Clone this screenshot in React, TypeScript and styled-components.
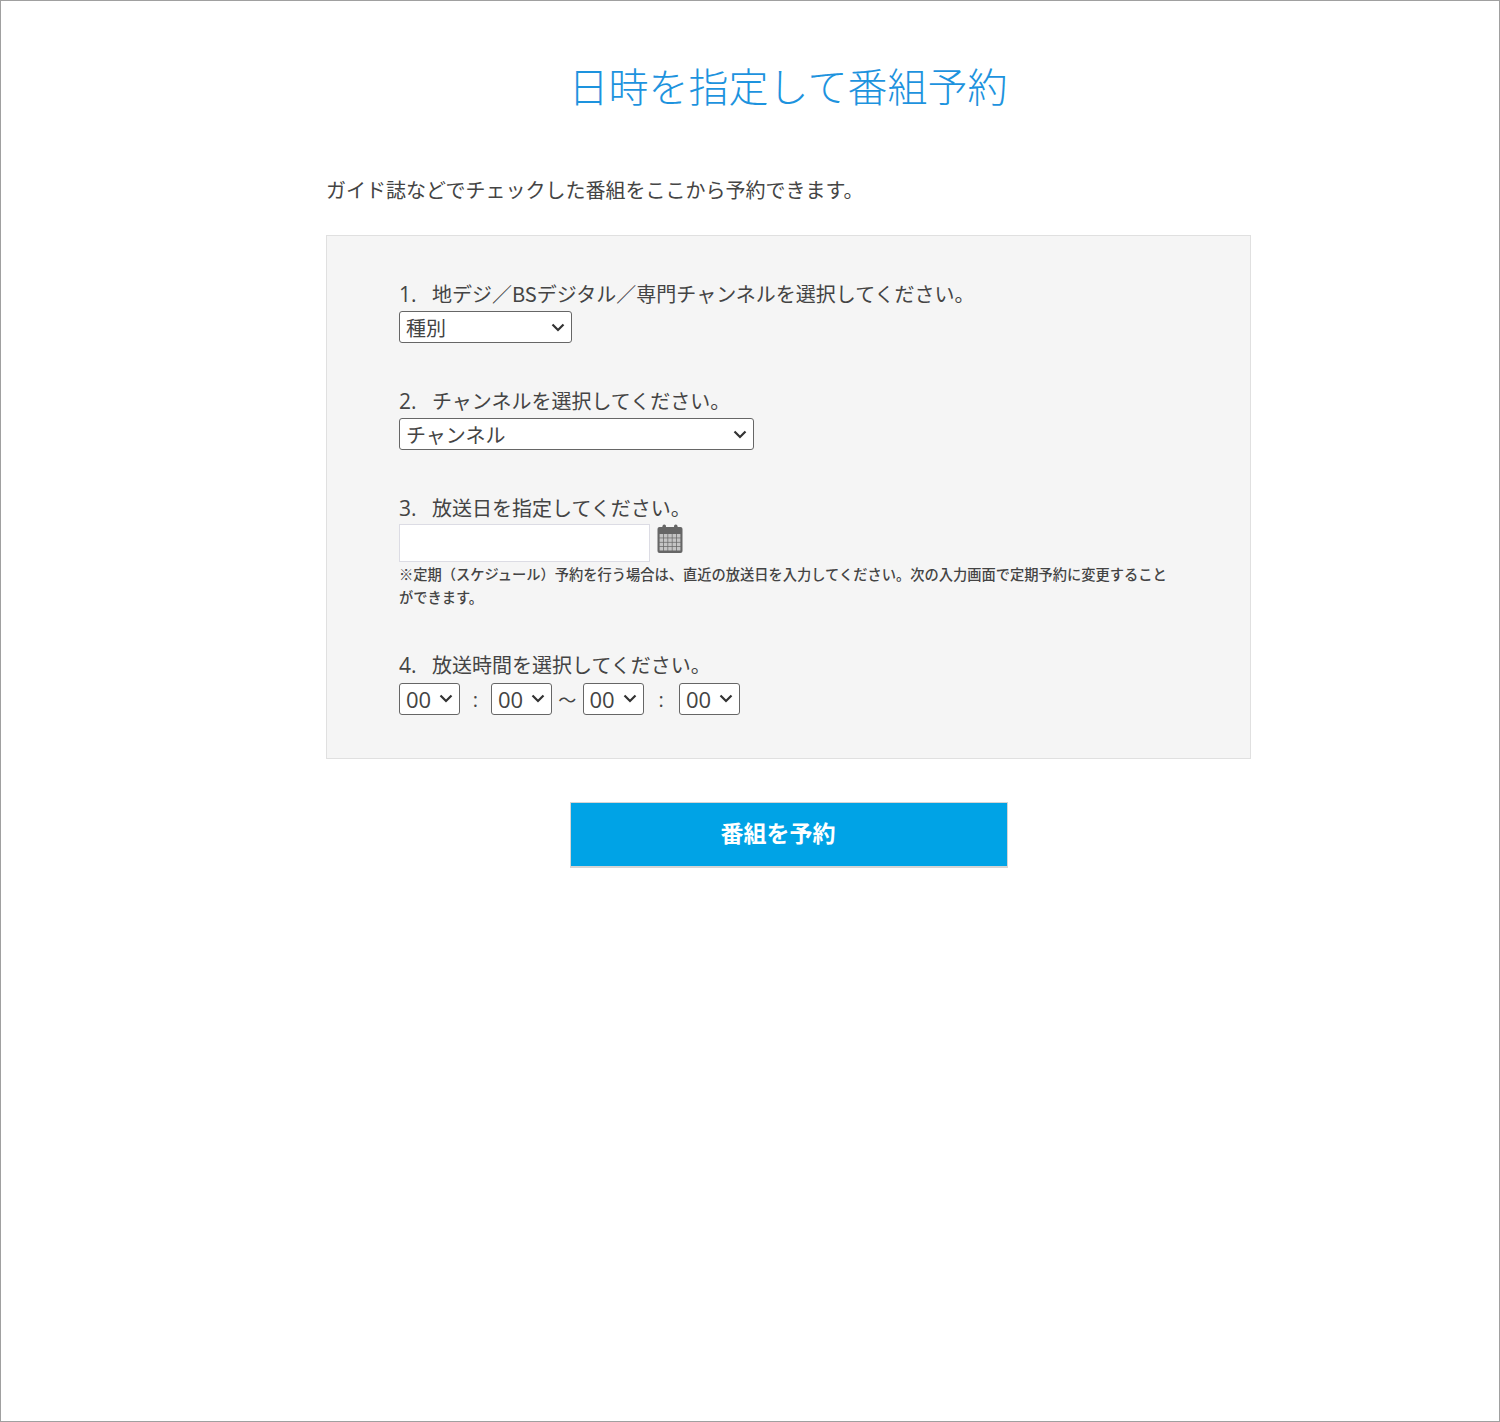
import React from "react";
import styled, { createGlobalStyle } from "styled-components";

const CHEVRON =
  "data:image/svg+xml;utf8,<svg xmlns='http://www.w3.org/2000/svg' width='14' height='9' viewBox='0 0 14 9'><path d='M1.5 1.5 L7 7 L12.5 1.5' fill='none' stroke='%23333' stroke-width='2.2'/></svg>";

const GlobalStyle = createGlobalStyle`
  html, body {
    margin: 0;
    padding: 0;
    background: #fff;
  }
  body {
    font-family: "Noto Sans CJK JP", "Noto Sans", sans-serif;
    color: #444;
  }
`;

const Frame = styled.div`
  box-sizing: border-box;
  width: 1500px;
  height: 1422px;
  border: 1px solid #a0a0a0;
  padding-top: 55px;
`;

const Content = styled.main`
  width: 925px;
  margin-left: 325px;
  display: flex;
  flex-direction: column;
`;

const Title = styled.h1`
  margin: 0;
  padding-right: 1px;
  font-size: 40px;
  line-height: 58px;
  font-weight: 300;
  color: #1d93de;
  text-align: center;
`;

const Intro = styled.p`
  margin: 61px 0 0;
  font-size: 20px;
  line-height: 30px;
`;

const Panel = styled.section`
  box-sizing: border-box;
  margin-top: 30px;
  height: 524px;
  padding: 43px 72px 0;
  background: #f5f5f5;
  border: 1px solid #e0e0e0;
`;

const Step = styled.div<{ $gap?: number }>`
  display: flex;
  flex-direction: column;
  align-items: flex-start;
  margin-bottom: ${(p) => p.$gap ?? 43}px;
`;

const StepLabel = styled.label`
  display: flex;
  font-size: 20px;
  line-height: 30px;
  height: 31px;
`;

const StepNumber = styled.span`
  width: 33px;
  font-family: "Open Sans", "Noto Sans", sans-serif;
  font-size: 21px;
`;

const Select = styled.select<{ $width: number; $latin?: boolean }>`
  box-sizing: border-box;
  width: ${(p) => p.$width}px;
  height: 32px;
  margin-top: ${(p) => (p.$latin ? 0 : 1)}px;
  padding: 0 6px;
  appearance: none;
  background: #fff url("${CHEVRON}") no-repeat right 6px center;
  border: 1px solid #666;
  border-radius: 3px;
  font-family: ${(p) => (p.$latin ? `"Open Sans", sans-serif` : `"Noto Sans CJK JP", "Noto Sans", sans-serif`)};
  font-size: ${(p) => (p.$latin ? 22 : 20)}px;
  color: #444;
`;

const DateRow = styled.div`
  display: flex;
  align-items: flex-start;
  gap: 7px;
`;

const DateInput = styled.input`
  box-sizing: border-box;
  width: 251px;
  height: 38px;
  background: #fff;
  border: 1px solid #dcdce4;
  outline: none;
`;

const CalendarIcon = styled.svg`
  width: 26px;
  height: 30px;
`;

const Note = styled.p`
  margin: 0;
  font-size: 14.26px;
  line-height: 23px;
  font-weight: 500;
  color: #444;
`;

const TimeRow = styled.div`
  display: flex;
  align-items: center;
`;

const Separator = styled.span<{ $width: number }>`
  width: ${(p) => p.$width}px;
  text-align: center;
  font-family: "Open Sans", sans-serif;
  font-size: 20px;
  line-height: 33px;
  padding-top: 2px;
`;

const Tilde = styled(Separator)`
  font-family: "Noto Sans CJK JP", sans-serif;
  font-size: 18px;
`;

const SubmitRow = styled.div`
  display: flex;
  margin-top: 43px;
  padding-left: 244px;
`;

const SubmitButton = styled.button`
  box-sizing: border-box;
  width: 438px;
  height: 66px;
  padding: 0 22px 5px 0;
  background: #00a3e6;
  border: 1px solid #d5d5d5;
  border-width: 1px 1px 2px;
  font-family: "Noto Sans CJK JP", "Noto Sans", sans-serif;
  font-size: 23px;
  font-weight: 700;
  color: #fff;
`;

const Calendar = () => {
  const cells = [];
  for (let r = 0; r < 4; r++) {
    for (let c = 0; c < 5; c++) {
      cells.push(<rect key={`${r}-${c}`} x={2.6 + c * 4.3} y={10 + r * 4.3} width="3.6" height="3.6" fill="#c4c4c4" />);
    }
  }
  return (
    <CalendarIcon viewBox="0 0 26 30">
      <rect x="0.5" y="3" width="25" height="26" rx="2" fill="#666" />
      <rect x="5.5" y="0.5" width="3.5" height="6" rx="1.7" fill="#666" />
      <rect x="17" y="0.5" width="3.5" height="6" rx="1.7" fill="#666" />
      {cells}
    </CalendarIcon>
  );
};

const TimeSelect = () => (
  <Select $width={61} $latin>
    <option>00</option>
  </Select>
);

const App: React.FC = () => {
  return (
    <>
      <GlobalStyle />
      <Frame>
        <Content>
          <Title>日時を指定して番組予約</Title>
          <Intro>ガイド誌などでチェックした番組をここから予約できます。</Intro>
          <Panel>
            <Step>
              <StepLabel>
                <StepNumber>1.</StepNumber>地デジ／BSデジタル／専門チャンネルを選択してください。
              </StepLabel>
              <Select $width={173}>
                <option>種別</option>
              </Select>
            </Step>
            <Step>
              <StepLabel>
                <StepNumber>2.</StepNumber>チャンネルを選択してください。
              </StepLabel>
              <Select $width={355}>
                <option>チャンネル</option>
              </Select>
            </Step>
            <Step $gap={42}>
              <StepLabel>
                <StepNumber>3.</StepNumber>放送日を指定してください。
              </StepLabel>
              <DateRow>
                <DateInput type="text" />
                <Calendar />
              </DateRow>
              <Note>
                ※定期（スケジュール）予約を行う場合は、直近の放送日を入力してください。次の入力画面で定期予約に変更することができます。
              </Note>
            </Step>
            <Step>
              <StepLabel>
                <StepNumber>4.</StepNumber>放送時間を選択してください。
              </StepLabel>
              <TimeRow>
                <TimeSelect />
                <Separator $width={31}>:</Separator>
                <TimeSelect />
                <Tilde $width={30.5}>～</Tilde>
                <TimeSelect />
                <Separator $width={35.5}>:</Separator>
                <TimeSelect />
              </TimeRow>
            </Step>
          </Panel>
          <SubmitRow>
            <SubmitButton type="button">番組を予約</SubmitButton>
          </SubmitRow>
        </Content>
      </Frame>
    </>
  );
};

export default App;
